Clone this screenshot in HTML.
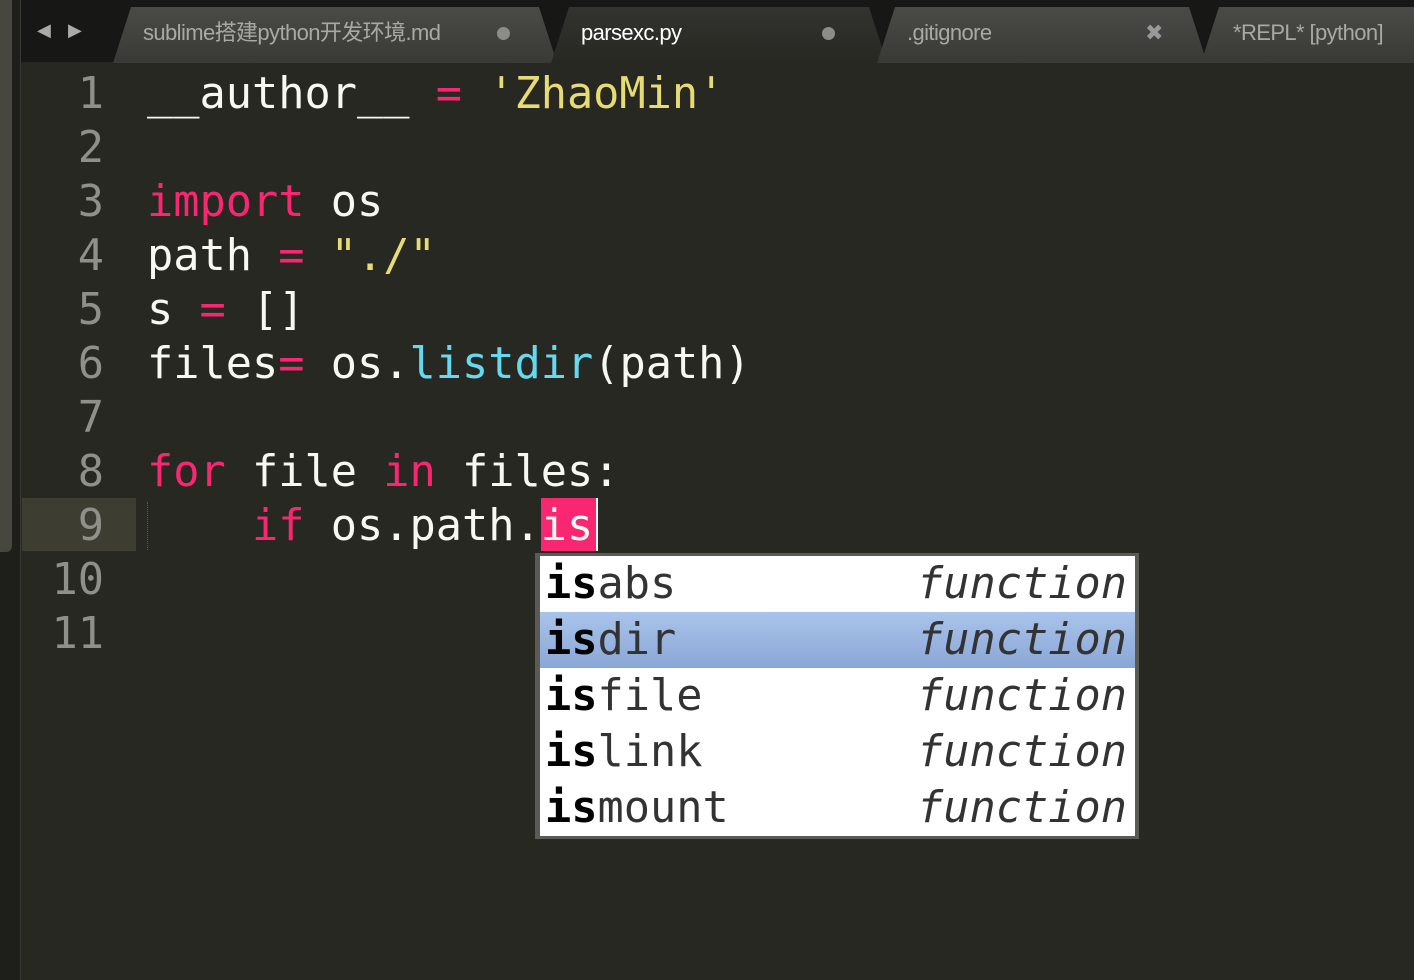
<!DOCTYPE html>
<html><head><meta charset="utf-8"><style>
*{margin:0;padding:0;box-sizing:border-box}
body{width:1414px;height:980px;background:#272822;position:relative;overflow:hidden;font-family:"DejaVu Sans Mono","Liberation Mono",monospace}
.side{position:absolute;left:0;top:0;width:21px;height:980px;background:#1e1f1b;border-right:1px solid #3a3a36}
.scroll{position:absolute;left:0;top:0;width:12px;height:552px;background:#47473f;border-radius:0 0 6px 0}
.tabbar{position:absolute;left:21px;top:0;width:1393px;height:62px;background:#171715}
.tab{position:absolute;top:7px;height:56px;background:linear-gradient(#4a4a46,#393936);border-radius:16px 16px 0 0;color:#a8a8a4;font:22px "Liberation Sans","Noto Sans CJK SC",sans-serif;letter-spacing:-0.6px;line-height:52px;padding-left:26px;clip-path:polygon(0 100%,18px 0,calc(100% - 18px) 0,100% 100%)}
.tab.act{background:linear-gradient(#33332f,#272822);color:#fff}
.arr{position:absolute;top:20px;color:#aaa;font-size:18px;font-family:"DejaVu Sans",sans-serif}
.dot{position:absolute;top:20px;width:13px;height:13px;border-radius:50%;background:#8c8c88}
.ln{position:absolute;left:22px;width:82px;text-align:right;color:#8f908a;font-size:43.6px;line-height:54px;height:54px}
.cl{position:absolute;left:147px;color:#f8f8f2;font-size:43.6px;line-height:54px;height:54px;white-space:pre}
.k{color:#f92672}.s{color:#e6db74}.f{color:#66d9ef}
.pop{position:absolute;left:535px;top:553px;width:604px;height:286px;background:#5a5a56;padding:3px 4px 3px 5px}
.row{height:56px;background:#fff;color:#333;font-size:43.6px;line-height:56px;padding-left:5px;position:relative;white-space:pre}
.row b{color:#000;font-weight:bold}
.row i{position:absolute;right:8px;top:0;font-style:oblique;color:#333}
.row.sel{background:linear-gradient(#a9c4ea,#8aa6d6)}
</style></head><body>
<div class="side"><div class="scroll"></div></div>
<div class="tabbar">
<span class="arr" style="left:16px">◀</span><span class="arr" style="left:47px">▶</span>
<div class="tab" style="left:92px;width:444px;padding-left:30px">sublime搭建python开发环境.md<span class="dot" style="left:384px"></span></div>
<div class="tab act" style="left:530px;width:336px;padding-left:30px">parsexc.py<span class="dot" style="left:271px"></span></div>
<div class="tab" style="left:856px;width:330px;padding-left:30px">.gitignore<span style="position:absolute;left:268px;color:#999">✖</span></div>
<div class="tab" style="left:1180px;width:240px;padding-left:32px">*REPL* [python]</div>
</div>
<div style="position:absolute;left:22px;top:498px;width:114px;height:53px;background:#3e3d32"></div>
<div style="position:absolute;left:147px;top:502px;height:48px;border-left:1px dotted #555"></div>
<div class="ln" style="top:67px">1</div><div class="ln" style="top:121px">2</div><div class="ln" style="top:175px">3</div><div class="ln" style="top:229px">4</div><div class="ln" style="top:283px">5</div><div class="ln" style="top:337px">6</div><div class="ln" style="top:391px">7</div><div class="ln" style="top:445px">8</div><div class="ln" style="top:499px">9</div><div class="ln" style="top:553px">10</div><div class="ln" style="top:607px">11</div>
<div class="cl" style="top:67px">__author__ <span class="k">=</span> <span class="s">'ZhaoMin'</span></div>
<div class="cl" style="top:175px"><span class="k">import</span> os</div>
<div class="cl" style="top:229px">path <span class="k">=</span> <span class="s">"./"</span></div>
<div class="cl" style="top:283px">s <span class="k">=</span> []</div>
<div class="cl" style="top:337px">files<span class="k">=</span> os.<span class="f">listdir</span>(path)</div>
<div class="cl" style="top:445px"><span class="k">for</span> file <span class="k">in</span> files:</div>
<div style="position:absolute;left:541px;top:498px;width:55px;height:53px;background:#f92672"></div>
<div style="position:absolute;left:596px;top:498px;width:2px;height:53px;background:#f8f8f0"></div>
<div class="cl" style="top:499px">    <span class="k">if</span> os.path.is</div>
<div class="pop">
<div class="row"><b>is</b>abs<i>function</i></div>
<div class="row sel"><b>is</b>dir<i>function</i></div>
<div class="row"><b>is</b>file<i>function</i></div>
<div class="row"><b>is</b>link<i>function</i></div>
<div class="row"><b>is</b>mount<i>function</i></div>
</div>
</body></html>
